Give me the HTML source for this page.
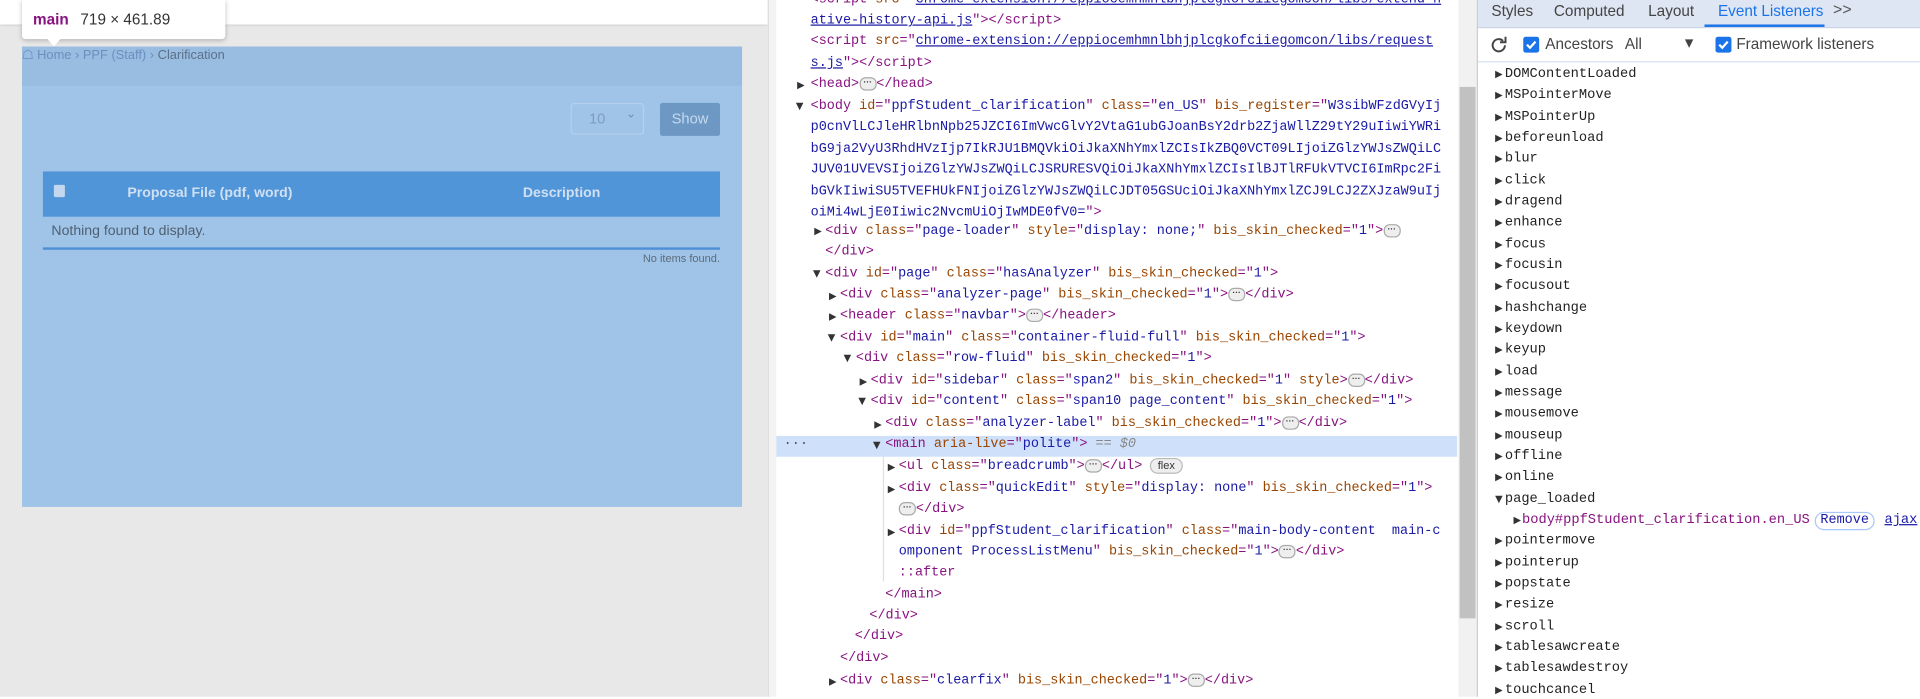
<!DOCTYPE html>
<html><head><meta charset="utf-8"><style>
html,body{margin:0;padding:0;width:1920px;height:697px;overflow:hidden;background:#fff}
#w{position:absolute;left:0;top:0;width:1568px;height:569px;transform:scale(1.22449);transform-origin:0 0;font-family:"Liberation Sans",sans-serif}
.a{position:absolute}
.m{font-family:"Liberation Mono",monospace;font-size:11px;white-space:pre;line-height:17px}
.t{color:#881280}.n{color:#994500}.v{color:#1a1aa6}.l{color:#1a1aa6;text-decoration:underline}
.tri{position:absolute;font-size:8px;color:#333;font-family:"DejaVu Sans",sans-serif}
.dot{display:inline-block;width:12px;height:9px;border:1px solid #aaa;border-radius:5px;background:#eee;font-size:7px;line-height:7px;text-align:center;vertical-align:middle;color:#333;font-family:"Liberation Sans";font-weight:bold}
.ev{position:absolute;left:1229px;font-family:"Liberation Mono",monospace;font-size:11.2px;color:#222;line-height:14px}
.et{position:absolute;left:1221px;font-size:8px;color:#333;font-family:"DejaVu Sans",sans-serif}
</style></head><body><div id="w">
<!-- left page -->
<div class="a" style="left:0;top:0;width:627px;height:569px;background:#e8e8e8"></div>
<div class="a" style="left:0;top:0;width:627px;height:20px;background:#fff;box-shadow:0 1px 2px rgba(0,0,0,.12)"></div>
<div class="a" style="left:18px;top:38px;width:588px;height:376px;background:#a0c4e8"></div>
<div class="a" style="left:18px;top:38px;width:588px;height:32px;background:#99bce1"></div>
<div class="a" style="left:18px;top:39px;font-size:10.5px;color:#6a8fbf">&#9750; Home › PPF (Staff) › <span style="color:#5c7089">Clarification</span></div>
<div class="a" style="left:466px;top:84px;width:60px;height:26px;border:1px solid #b4d0ec;border-radius:3px;box-sizing:border-box"></div>
<div class="a" style="left:481px;top:90px;font-size:12px;color:#7d9cc0">10</div>
<div class="a" style="left:511px;top:88px;font-size:10px;color:#6f8fb5">&#8964;</div>
<div class="a" style="left:539px;top:84px;width:49px;height:27px;background:#6d98c4;border-radius:2px;color:#c5d9ee;font-size:12px;text-align:center;line-height:27px">Show</div>
<div class="a" style="left:35px;top:140px;width:553px;height:37px;background:#5195d9"></div>
<div class="a" style="left:44px;top:151px;width:9px;height:10px;background:#c3d8ee;border-radius:1px"></div>
<div class="a" style="left:104px;top:152px;font-size:11.5px;font-weight:bold;color:#cfe0f3">Proposal File (pdf, word)</div>
<div class="a" style="left:427px;top:152px;font-size:11.5px;font-weight:bold;color:#cfe0f3">Description</div>
<div class="a" style="left:42px;top:183px;font-size:11.5px;color:#4f6072">Nothing found to display.</div>
<div class="a" style="left:35px;top:202px;width:553px;height:2px;background:#4f8fd6"></div>
<div class="a" style="left:450px;top:206px;width:138px;text-align:right;font-size:9px;color:#5c6b7a">No items found.</div>
<div class="a" style="left:18px;top:0;width:166px;height:32px;background:#fff;border-radius:0 0 3px 3px;box-shadow:0 1px 4px rgba(0,0,0,.25)"></div>
<div class="a" style="left:38px;top:31px;width:0;height:0;border-left:6px solid transparent;border-right:6px solid transparent;border-top:7px solid #fff"></div>
<div class="a" style="left:27px;top:9px;font-size:12.5px"><b style="color:#881280">main</b> <span style="color:#333;margin-left:6px">719 × 461.89</span></div>
<!-- code panel -->
<div class="a" style="left:627px;top:0;width:6px;height:569px;background:#f3f3f3;border-left:1px solid #ddd"></div>
<div class="a" style="left:634px;top:356px;width:556px;height:17px;background:#cfe0fb"></div>
<div class="a" style="left:1191px;top:0;width:15px;height:569px;background:#f1f1f1"></div>
<div class="a" style="left:1192px;top:71px;width:13px;height:434px;background:#c1c1c1"></div>
<div class="a" style="left:1206px;top:0;width:1px;height:569px;background:#ccc"></div>
<div class="a" style="left:721px;top:373px;width:1px;height:102px;background:#e0e0e0"></div>
<div class="a m" style="left:640px;top:355px;color:#555">···</div>
<div class="a m" style="left:662px;top:-8px"><span class="t">&lt;script</span> <span class="n">src</span><span class="t">="</span><span class="l">chrome-extension://eppiocemhmnlbhjplcgkofciiegomcon/libs/extend-n</span></div>
<div class="a m" style="left:662px;top:9px"><span class="l">ative-history-api.js</span><span class="t">"&gt;&lt;/script&gt;</span></div>
<div class="a m" style="left:662px;top:26px"><span class="t">&lt;script</span> <span class="n">src</span><span class="t">="</span><span class="l">chrome-extension://eppiocemhmnlbhjplcgkofciiegomcon/libs/request</span></div>
<div class="a m" style="left:662px;top:44px"><span class="l">s.js</span><span class="t">"&gt;&lt;/script&gt;</span></div>
<div class="tri" style="left:651px;top:65px">▶</div>
<div class="a m" style="left:662px;top:61px"><span class="t">&lt;head&gt;</span><span class="dot">···</span><span class="t">&lt;/head&gt;</span></div>
<div class="tri" style="left:650px;top:82px">▼</div>
<div class="a m" style="left:662px;top:79px"><span class="t">&lt;body</span> <span class="n">id</span><span class="t">="</span><span class="v">ppfStudent_clarification</span><span class="t">"</span> <span class="n">class</span><span class="t">="</span><span class="v">en_US</span><span class="t">"</span> <span class="n">bis_register</span><span class="t">="</span><span class="v">W3sibWFzdGVyIj</span></div>
<div class="a m v" style="left:662px;top:96px">p0cnVlLCJleHRlbnNpb25JZCI6ImVwcGlvY2VtaG1ubGJoanBsY2drb2ZjaWllZ29tY29uIiwiYWRi</div>
<div class="a m v" style="left:662px;top:114px">bG9ja2VyU3RhdHVzIjp7IkRJU1BMQVkiOiJkaXNhYmxlZCIsIkZBQ0VCT09LIjoiZGlzYWJsZWQiLC</div>
<div class="a m v" style="left:662px;top:131px">JUV01UVEVSIjoiZGlzYWJsZWQiLCJSRURESVQiOiJkaXNhYmxlZCIsIlBJTlRFUkVTVCI6ImRpc2Fi</div>
<div class="a m v" style="left:662px;top:149px">bGVkIiwiSU5TVEFHUkFNIjoiZGlzYWJsZWQiLCJDT05GSUciOiJkaXNhYmxlZCJ9LCJ2ZXJzaW9uIj</div>
<div class="a m" style="left:662px;top:166px"><span class="v">oiMi4wLjE0Iiwic2NvcmUiOjIwMDE0fV0=</span><span class="t">"&gt;</span></div>
<div class="tri" style="left:665px;top:184px">▶</div>
<div class="a m" style="left:674px;top:181px"><span class="t">&lt;div</span> <span class="n">class</span><span class="t">="</span><span class="v">page-loader</span><span class="t">"</span> <span class="n">style</span><span class="t">="</span><span class="v">display: none;</span><span class="t">"</span> <span class="n">bis_skin_checked</span><span class="t">="</span><span class="v">1</span><span class="t">"&gt;</span><span class="dot">···</span></div>
<div class="a m t" style="left:674px;top:198px">&lt;/div&gt;</div>
<div class="tri" style="left:664px;top:219px">▼</div>
<div class="a m" style="left:674px;top:216px"><span class="t">&lt;div</span> <span class="n">id</span><span class="t">="</span><span class="v">page</span><span class="t">"</span> <span class="n">class</span><span class="t">="</span><span class="v">hasAnalyzer</span><span class="t">"</span> <span class="n">bis_skin_checked</span><span class="t">="</span><span class="v">1</span><span class="t">"&gt;</span></div>
<div class="tri" style="left:677px;top:237px">▶</div>
<div class="a m" style="left:686px;top:233px"><span class="t">&lt;div</span> <span class="n">class</span><span class="t">="</span><span class="v">analyzer-page</span><span class="t">"</span> <span class="n">bis_skin_checked</span><span class="t">="</span><span class="v">1</span><span class="t">"&gt;</span><span class="dot">···</span><span class="t">&lt;/div&gt;</span></div>
<div class="tri" style="left:677px;top:254px">▶</div>
<div class="a m" style="left:686px;top:250px"><span class="t">&lt;header</span> <span class="n">class</span><span class="t">="</span><span class="v">navbar</span><span class="t">"&gt;</span><span class="dot">···</span><span class="t">&lt;/header&gt;</span></div>
<div class="tri" style="left:676px;top:271px">▼</div>
<div class="a m" style="left:686px;top:268px"><span class="t">&lt;div</span> <span class="n">id</span><span class="t">="</span><span class="v">main</span><span class="t">"</span> <span class="n">class</span><span class="t">="</span><span class="v">container-fluid-full</span><span class="t">"</span> <span class="n">bis_skin_checked</span><span class="t">="</span><span class="v">1</span><span class="t">"&gt;</span></div>
<div class="tri" style="left:689px;top:288px">▼</div>
<div class="a m" style="left:699px;top:285px"><span class="t">&lt;div</span> <span class="n">class</span><span class="t">="</span><span class="v">row-fluid</span><span class="t">"</span> <span class="n">bis_skin_checked</span><span class="t">="</span><span class="v">1</span><span class="t">"&gt;</span></div>
<div class="tri" style="left:702px;top:307px">▶</div>
<div class="a m" style="left:711px;top:303px"><span class="t">&lt;div</span> <span class="n">id</span><span class="t">="</span><span class="v">sidebar</span><span class="t">"</span> <span class="n">class</span><span class="t">="</span><span class="v">span2</span><span class="t">"</span> <span class="n">bis_skin_checked</span><span class="t">="</span><span class="v">1</span><span class="t">"</span> <span class="n">style</span><span class="t">&gt;</span><span class="dot">···</span><span class="t">&lt;/div&gt;</span></div>
<div class="tri" style="left:701px;top:323px">▼</div>
<div class="a m" style="left:711px;top:320px"><span class="t">&lt;div</span> <span class="n">id</span><span class="t">="</span><span class="v">content</span><span class="t">"</span> <span class="n">class</span><span class="t">="</span><span class="v">span10 page_content</span><span class="t">"</span> <span class="n">bis_skin_checked</span><span class="t">="</span><span class="v">1</span><span class="t">"&gt;</span></div>
<div class="tri" style="left:714px;top:342px">▶</div>
<div class="a m" style="left:723px;top:338px"><span class="t">&lt;div</span> <span class="n">class</span><span class="t">="</span><span class="v">analyzer-label</span><span class="t">"</span> <span class="n">bis_skin_checked</span><span class="t">="</span><span class="v">1</span><span class="t">"&gt;</span><span class="dot">···</span><span class="t">&lt;/div&gt;</span></div>
<div class="tri" style="left:713px;top:359px">▼</div>
<div class="a m" style="left:723px;top:355px"><span class="t">&lt;main</span> <span class="n">aria-live</span><span class="t">="</span><span class="v">polite</span><span class="t">"&gt;</span> <span style="color:#888">== <i>$0</i></span></div>
<div class="tri" style="left:725px;top:377px">▶</div>
<div class="a m" style="left:734px;top:373px"><span class="t">&lt;ul</span> <span class="n">class</span><span class="t">="</span><span class="v">breadcrumb</span><span class="t">"&gt;</span><span class="dot">···</span><span class="t">&lt;/ul&gt;</span> <span style="display:inline-block;border:1px solid #bbb;border-radius:7px;background:#eee;font-size:9px;line-height:11px;padding:0 5px;font-family:'Liberation Sans';color:#333;vertical-align:middle">flex</span></div>
<div class="tri" style="left:725px;top:395px">▶</div>
<div class="a m" style="left:734px;top:391px"><span class="t">&lt;div</span> <span class="n">class</span><span class="t">="</span><span class="v">quickEdit</span><span class="t">"</span> <span class="n">style</span><span class="t">="</span><span class="v">display: none</span><span class="t">"</span> <span class="n">bis_skin_checked</span><span class="t">="</span><span class="v">1</span><span class="t">"&gt;</span></div>
<div class="a m" style="left:734px;top:408px"><span class="dot">···</span><span class="t">&lt;/div&gt;</span></div>
<div class="tri" style="left:725px;top:430px">▶</div>
<div class="a m" style="left:734px;top:426px"><span class="t">&lt;div</span> <span class="n">id</span><span class="t">="</span><span class="v">ppfStudent_clarification</span><span class="t">"</span> <span class="n">class</span><span class="t">="</span><span class="v">main-body-content  main-c</span></div>
<div class="a m" style="left:734px;top:443px"><span class="v">omponent ProcessListMenu</span><span class="t">"</span> <span class="n">bis_skin_checked</span><span class="t">="</span><span class="v">1</span><span class="t">"&gt;</span><span class="dot">···</span><span class="t">&lt;/div&gt;</span></div>
<div class="a m t" style="left:734px;top:460px">::after</div>
<div class="a m t" style="left:723px;top:478px">&lt;/main&gt;</div>
<div class="a m t" style="left:710px;top:495px">&lt;/div&gt;</div>
<div class="a m t" style="left:698px;top:512px">&lt;/div&gt;</div>
<div class="a m t" style="left:686px;top:530px">&lt;/div&gt;</div>
<div class="tri" style="left:677px;top:552px">▶</div>
<div class="a m" style="left:686px;top:548px"><span class="t">&lt;div</span> <span class="n">class</span><span class="t">="</span><span class="v">clearfix</span><span class="t">"</span> <span class="n">bis_skin_checked</span><span class="t">="</span><span class="v">1</span><span class="t">"&gt;</span><span class="dot">···</span><span class="t">&lt;/div&gt;</span></div>
<!-- right panel -->
<div class="a" style="left:1207px;top:0;width:361px;height:22px;background:#dfe6f3;border-bottom:1px solid #cbd5e6"></div>
<div class="a" style="left:1218px;top:2px;font-size:12.5px;color:#444">Styles</div>
<div class="a" style="left:1269px;top:2px;font-size:12.5px;color:#444">Computed</div>
<div class="a" style="left:1346px;top:2px;font-size:12.5px;color:#444">Layout</div>
<div class="a" style="left:1403px;top:2px;font-size:12.5px;color:#1a73e8">Event Listeners</div>
<div class="a" style="left:1392px;top:20px;width:98px;height:2px;background:#1a73e8"></div>
<div class="a" style="left:1497px;top:0;font-size:13px;color:#555">&gt;&gt;</div>
<div class="a" style="left:1207px;top:50px;width:361px;height:1px;background:#d5e0f2"></div>
<svg class="a" style="left:1216px;top:29px" width="16" height="16" viewBox="0 0 16 16"><path d="M13 8a5 5 0 1 1-1.5-3.6" fill="none" stroke="#444" stroke-width="1.6"/><path d="M9 3.5h4.5V-1" fill="none" stroke="#444" stroke-width="1.6" transform="translate(0,2)"/></svg>
<div class="a" style="left:1244px;top:30px;width:13px;height:13px;background:#1a73e8;border-radius:2px"><svg width="13" height="13"><path d="M3 6.5l2.5 2.5 4.5-5" stroke="#fff" stroke-width="1.8" fill="none"/></svg></div>
<div class="a" style="left:1262px;top:29px;font-size:12.5px;color:#444">Ancestors</div>
<div class="a" style="left:1327px;top:29px;font-size:12.5px;color:#444">All</div>
<div class="a" style="left:1376px;top:31px;font-size:9px;color:#444;font-family:'DejaVu Sans'">▼</div>
<div class="a" style="left:1401px;top:30px;width:13px;height:13px;background:#1a73e8;border-radius:2px"><svg width="13" height="13"><path d="M3 6.5l2.5 2.5 4.5-5" stroke="#fff" stroke-width="1.8" fill="none"/></svg></div>
<div class="a" style="left:1418px;top:29px;font-size:12.5px;color:#444">Framework listeners</div>
<div class="et" style="top:56px">▶</div><div class="ev" style="top:54px">DOMContentLoaded</div>
<div class="et" style="top:73px">▶</div><div class="ev" style="top:71px">MSPointerMove</div>
<div class="et" style="top:91px">▶</div><div class="ev" style="top:89px">MSPointerUp</div>
<div class="et" style="top:108px">▶</div><div class="ev" style="top:106px">beforeunload</div>
<div class="et" style="top:125px">▶</div><div class="ev" style="top:123px">blur</div>
<div class="et" style="top:143px">▶</div><div class="ev" style="top:141px">click</div>
<div class="et" style="top:160px">▶</div><div class="ev" style="top:158px">dragend</div>
<div class="et" style="top:177px">▶</div><div class="ev" style="top:175px">enhance</div>
<div class="et" style="top:195px">▶</div><div class="ev" style="top:193px">focus</div>
<div class="et" style="top:212px">▶</div><div class="ev" style="top:210px">focusin</div>
<div class="et" style="top:229px">▶</div><div class="ev" style="top:227px">focusout</div>
<div class="et" style="top:247px">▶</div><div class="ev" style="top:245px">hashchange</div>
<div class="et" style="top:264px">▶</div><div class="ev" style="top:262px">keydown</div>
<div class="et" style="top:281px">▶</div><div class="ev" style="top:279px">keyup</div>
<div class="et" style="top:299px">▶</div><div class="ev" style="top:297px">load</div>
<div class="et" style="top:316px">▶</div><div class="ev" style="top:314px">message</div>
<div class="et" style="top:333px">▶</div><div class="ev" style="top:331px">mousemove</div>
<div class="et" style="top:351px">▶</div><div class="ev" style="top:349px">mouseup</div>
<div class="et" style="top:368px">▶</div><div class="ev" style="top:366px">offline</div>
<div class="et" style="top:385px">▶</div><div class="ev" style="top:383px">online</div>
<div class="et" style="top:403px">▼</div><div class="ev" style="top:401px">page_loaded</div>
<div class="et" style="top:420px;left:1236px">▶</div><div class="ev" style="top:418px;left:1243px;color:#881280">body#ppfStudent_clarification.en_US</div>
<div class="a" style="left:1482px;top:418px;width:49px;height:15px;border:1px solid #a8c7fa;border-radius:8px;box-sizing:border-box;font-size:11px;line-height:13px;text-align:center;color:#1a1aa6;font-family:'Liberation Mono',monospace">Remove</div>
<div class="ev" style="top:418px;left:1539px;color:#1a1aa6;text-decoration:underline">ajax</div>
<div class="et" style="top:437px">▶</div><div class="ev" style="top:435px">pointermove</div>
<div class="et" style="top:455px">▶</div><div class="ev" style="top:453px">pointerup</div>
<div class="et" style="top:472px">▶</div><div class="ev" style="top:470px">popstate</div>
<div class="et" style="top:489px">▶</div><div class="ev" style="top:487px">resize</div>
<div class="et" style="top:507px">▶</div><div class="ev" style="top:505px">scroll</div>
<div class="et" style="top:524px">▶</div><div class="ev" style="top:522px">tablesawcreate</div>
<div class="et" style="top:541px">▶</div><div class="ev" style="top:539px">tablesawdestroy</div>
<div class="et" style="top:559px">▶</div><div class="ev" style="top:557px">touchcancel</div>
</div></body></html>
